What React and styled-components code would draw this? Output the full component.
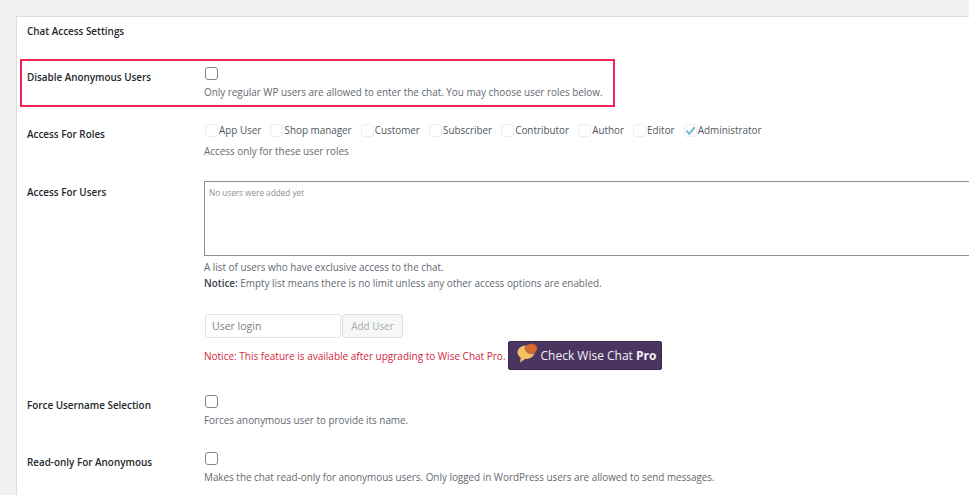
import React from 'react'
import styled, { createGlobalStyle } from 'styled-components'

const Global = createGlobalStyle`
  html, body { margin: 0; padding: 0; height: 495px; overflow: hidden; background: #f1f1f1; }
  body { font-family: "Open Sans", "Noto Sans", sans-serif; font-size: 9.9px; color: #646970; }
  * { box-sizing: border-box; }
`

const Page = styled.div`
  position: relative;
  width: 969px;
  height: 495px;
  padding: 16px 0 0 16px;
  overflow: hidden;
`

const Card = styled.div`
  width: 980px;
  height: 500px;
  background: #fff;
  border: 1px solid #dcdcdc;
  padding: 0 0 0 10px;
`

const Title = styled.h2`
  margin: 0;
  padding-top: 7px;
  height: 48px;
  font-size: 9.9px;
  line-height: 15px;
  font-weight: 600;
  color: #23282d;
`

const Row = styled.div`
  display: grid;
  grid-template-columns: 177px 1fr;
  height: ${p => p.$h}px;
  padding-top: ${p => p.$top}px;
`

const Label = styled.div`
  font-size: 9.9px;
  line-height: 15px;
  font-weight: 600;
  color: #23282d;
  padding-top: ${p => p.$top}px;
`

const Field = styled.div`
  display: flex;
  flex-direction: column;
  align-items: flex-start;
`

const Check = styled.span`
  display: block;
  flex: none;
  width: 13px;
  height: 13px;
  margin-left: 1px;
  background: #fff;
  border: 1px solid #7e8993;
  border-radius: 3px;
`

const Hint = styled.p`
  margin: ${p => p.$top || 0}px 0 0;
  font-size: 9.9px;
  line-height: 16px;
  color: #646970;
  strong { font-weight: 600; color: #3c434a; }
`

const Roles = styled.div`
  display: flex;
  height: 16px;
  gap: 8.1px;
`

const Role = styled.label`
  display: flex;
  align-items: center;
  gap: 1px;
  font-size: 9.9px;
  line-height: 16px;
  color: #50575e;
`

const RoleBox = styled.span`
  display: flex;
  align-items: center;
  justify-content: center;
  width: 13px;
  height: 13px;
  margin-left: 1px;
  background: #fff;
  border: 1px solid #eeeeee;
  border-radius: 3px;
`

const Area = styled.div`
  width: 800px;
  height: 75px;
  padding: 4px 4px;
  background: #fff;
  border: 1px solid #8c8f94;
  font-size: 8.2px;
  line-height: 13px;
  color: #8a8f94;
`

const AddRow = styled.div`
  display: flex;
  gap: 1px;
  margin: 23px 0 0 1px;
`

const Login = styled.div`
  width: 136px;
  height: 24px;
  padding-left: 6px;
  background: #fff;
  border: 1px solid #e4e4e4;
  border-radius: 3px;
  font-size: 10.5px;
  line-height: 22px;
  color: #7a7f84;
`

const AddButton = styled.div`
  width: 61px;
  height: 24px;
  background: #f6f7f7;
  border: 1px solid #dcdcde;
  border-radius: 3px;
  font-size: 9.9px;
  line-height: 22px;
  text-align: center;
  color: #a7aaad;
`

const NoticeRow = styled.div`
  display: flex;
  align-items: center;
  gap: 2px;
  margin-top: 3px;
`

const Notice = styled.span`
  font-size: 10px;
  color: #d1263a;
`

const ProButton = styled.div`
  display: flex;
  align-items: center;
  gap: 2px;
  width: 154px;
  height: 29px;
  padding-left: 8px;
  background: #4a3560;
  border: 1px solid #3b2a4e;
  border-radius: 2px;
  font-size: 12px;
  white-space: nowrap;
  color: #f4f1f6;
  strong { font-weight: 700; }
  svg { margin-top: -5px; }
`

const Highlight = styled.div`
  position: absolute;
  left: 20px;
  top: 59px;
  width: 595px;
  height: 48px;
  border: 2px solid #ee2454;
  pointer-events: none;
`

const roles = ['App User', 'Shop manager', 'Customer', 'Subscriber', 'Contributor', 'Author', 'Editor', 'Administrator']

const Bubbles = () => (
  <svg width="22" height="21" viewBox="0 0 22 21">
    <path d="M9 2.500c-4.900 0-8.500 3-8.500 6.800 0 2.300 1.300 4.200 3.300 5.400L3 19.500l5-3.600h1c4.900 0 8.500-3 8.500-6.700S13.900 2.500 9 2.500z" fill="#f5bf63" />
    <path d="M14.500.5c-3.500 0-6.300 2.300-6.300 5s2.800 5 6.300 5c.4 0 .8 0 1.200-.1l2.800 1.600-.4-2.800c1.500-.9 2.400-2.300 2.400-3.700 0-2.700-2.800-5-6-5z" fill="#d9682f" stroke="#4a3560" strokeWidth="0.5" />
  </svg>
)

export default function App() {
  return (
    <Page>
      <Global />
      <Card>
        <Title>Chat Access Settings</Title>
        <Row $h={57} $top={2}>
          <Label $top={3}>Disable Anonymous Users</Label>
          <Field>
            <Check />
            <Hint $top={4}>Only regular WP users are allowed to enter the chat. You may choose user roles below.</Hint>
          </Field>
        </Row>
        <Row $h={59} $top={0}>
          <Label $top={5}>Access For Roles</Label>
          <Field>
            <Roles>
              {roles.map(r => (
                <Role key={r}>
                  <RoleBox>
                    {r === 'Administrator' && (
                      <svg width="11" height="11" viewBox="0 0 11 11">
                        <path d="M1.500 5.500 4.200 9 9.800 2.200" fill="none" stroke="#72b9dc" strokeWidth="2" />
                      </svg>
                    )}
                  </RoleBox>
                  {r}
                </Role>
              ))}
            </Roles>
            <Hint $top={5}>Access only for these user roles</Hint>
          </Field>
        </Row>
        <Row $h={213} $top={0}>
          <Label $top={4}>Access For Users</Label>
          <Field>
            <Area>No users were added yet</Area>
            <Hint $top={3}>A list of users who have exclusive access to the chat.</Hint>
            <Hint><strong>Notice:</strong> Empty list means there is no limit unless any other access options are enabled.</Hint>
            <AddRow>
              <Login>User login</Login>
              <AddButton>Add User</AddButton>
            </AddRow>
            <NoticeRow>
              <Notice>Notice: This feature is available after upgrading to Wise Chat Pro.</Notice>
              <ProButton><Bubbles /><span>Check Wise Chat <strong>Pro</strong></span></ProButton>
            </NoticeRow>
          </Field>
        </Row>
        <Row $h={57} $top={1}>
          <Label $top={3}>Force Username Selection</Label>
          <Field>
            <Check />
            <Hint $top={4}>Forces anonymous user to provide its name.</Hint>
          </Field>
        </Row>
        <Row $h={57} $top={1}>
          <Label $top={3}>Read-only For Anonymous</Label>
          <Field>
            <Check />
            <Hint $top={4}>Makes the chat read-only for anonymous users. Only logged in WordPress users are allowed to send messages.</Hint>
          </Field>
        </Row>
      </Card>
      <Highlight />
    </Page>
  )
}
